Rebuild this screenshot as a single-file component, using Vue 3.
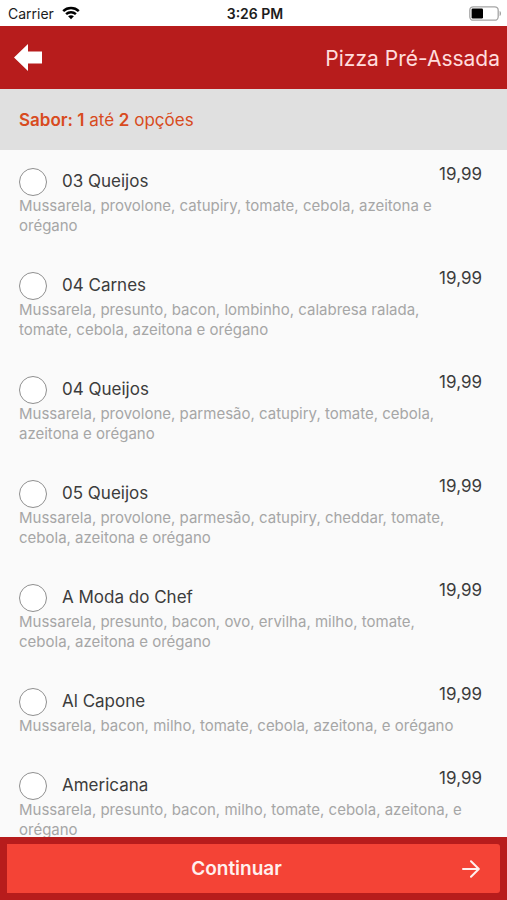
<script setup>
import { ref } from 'vue'

const chosen = ref([])
const flavours = [
  { id: 'queijos-03', name: '03 Queijos', price: '19,99', text: 'Mussarela, provolone, catupiry, tomate, cebola, azeitona e orégano' },
  { id: 'carnes-04', name: '04 Carnes', price: '19,99', text: 'Mussarela, presunto, bacon, lombinho, calabresa ralada, tomate, cebola, azeitona e orégano' },
  { id: 'queijos-04', name: '04 Queijos', price: '19,99', text: 'Mussarela, provolone, parmesão, catupiry, tomate, cebola, azeitona e orégano' },
  { id: 'queijos-05', name: '05 Queijos', price: '19,99', text: 'Mussarela, provolone, parmesão, catupiry, cheddar, tomate, cebola, azeitona e orégano' },
  { id: 'moda-chef', name: 'A Moda do Chef', price: '19,99', text: 'Mussarela, presunto, bacon, ovo, ervilha, milho, tomate, cebola, azeitona e orégano' },
  { id: 'al-capone', name: 'Al Capone', price: '19,99', text: 'Mussarela, bacon, milho, tomate, cebola, azeitona, e orégano' },
  { id: 'americana', name: 'Americana', price: '19,99', text: 'Mussarela, presunto, bacon, milho, tomate, cebola, azeitona, e orégano' },
]
</script>

<template>
  <div class="screen">
    <div class="status">
      <div class="carrier">
        <span>Carrier</span>
        <svg width="18" height="14" viewBox="0 0 18 14" aria-hidden="true">
          <g fill="none" stroke="#000" stroke-width="2.5">
            <path d="M1.2 5.2C5.6 1 12.4 1 16.8 5.2" />
            <path d="M4.1 8.2C6.9 5.6 11.1 5.6 13.9 8.2" />
          </g>
          <path d="M6.1 10.3C7.8 8.9 10.2 8.9 11.9 10.3L9 13.2Z" />
        </svg>
      </div>
      <span class="time">3:26 PM</span>
      <div class="battery">
        <svg width="33" height="15" viewBox="0 0 33 15" aria-hidden="true">
          <rect x="0.8" y="0.8" width="28.4" height="13.4" rx="3.5" fill="#fff" stroke="#a5a5a5" stroke-width="1.3" />
          <rect x="2.6" y="2.6" width="11.4" height="9.8" rx="1.2" />
          <path d="M30.6 5C32.4 5.6 32.4 9.4 30.6 10Z" fill="#999" />
        </svg>
      </div>
    </div>

    <header class="bar">
      <button class="back" type="button" aria-label="Voltar">
        <svg width="28" height="28" viewBox="0 0 28 28" aria-hidden="true">
          <path d="M0 13.5L14 0V7.5H28V19.5H14V27Z" fill="#fff" />
        </svg>
      </button>
      <h1>Pizza Pré-Assada</h1>
    </header>

    <p class="rule"><b>Sabor: 1</b> até <b>2</b> opções</p>

    <ul class="list">
      <li v-for="item in flavours" :key="item.id" class="item">
        <div class="pick">
          <input :id="item.id" v-model="chosen" type="checkbox" :value="item.id" />
          <label :for="item.id">{{ item.name }}</label>
        </div>
        <span class="price">{{ item.price }}</span>
        <p class="text">{{ item.text }}</p>
      </li>
    </ul>

    <footer class="foot">
      <button class="next" type="button">
        <span>Continuar</span>
        <svg width="18" height="18" viewBox="0 0 18 18" aria-hidden="true">
          <path d="M1 9H16.5M9 1.2L16.8 9L9 16.8" fill="none" stroke="#fff0ee" stroke-width="2" stroke-linecap="round" stroke-linejoin="round" />
        </svg>
      </button>
    </footer>
  </div>
</template>

<style>
body {
  background: #fafafa;
}
</style>

<style scoped>
.screen {
  display: flex;
  flex-direction: column;
  height: 100vh;
  background: #fafafa;
  color: #3c3c3c;
  font-family: Inter, "Liberation Sans", sans-serif;
}

.status {
  display: grid;
  grid-template-columns: 1fr auto 1fr;
  align-items: center;
  flex: none;
  height: 26px;
  padding: 0 5px 0 8px;
  background: #fff;
  color: #1c1c1c;
  font-size: 14px;
}

.carrier {
  display: flex;
  align-items: center;
  gap: 8px;
}

.time {
  font-weight: 600;
}

.battery {
  display: flex;
  justify-content: flex-end;
}

.bar {
  display: flex;
  align-items: center;
  justify-content: space-between;
  flex: none;
  height: 63px;
  padding: 0 7px 0 14px;
  background: #b71c1c;
}

.back {
  display: flex;
  padding: 0;
  border: 0;
  background: none;
}

h1 {
  margin: 0;
  color: #ffdcdc;
  font-size: 21px;
  font-weight: 400;
  line-height: 24px;
  padding-top: 2px;
}

.rule {
  flex: none;
  margin: 0;
  padding: 21px 19px 19px;
  background: #e0e0e0;
  color: #d84b20;
  font-size: 17px;
  line-height: 21px;
}

.rule b {
  font-weight: 600;
}

.list {
  flex: 1;
  min-height: 0;
  margin: 0;
  padding: 0;
  overflow: hidden;
  list-style: none;
}

.item {
  display: grid;
  grid-template-columns: 1fr auto;
  padding: 14px 25px 18px 19px;
}

.pick {
  display: flex;
  align-items: flex-start;
  gap: 15px;
  height: 28px;
  padding-top: 4px;
}

.pick input {
  flex: none;
  width: 28px;
  height: 28px;
  margin: 0;
  border: 1px solid #8f8f8f;
  border-radius: 50%;
  background: #fff;
  appearance: none;
}

.pick input:checked {
  border: 8px solid #f44336;
}

.pick label {
  font-size: 17px;
  line-height: 26px;
}

.text {
  grid-column: 1 / -1;
  margin: 0;
  padding-right: 12px;
  color: #a6a6a6;
  font-size: 15px;
  line-height: 20px;
}

.price {
  font-size: 17px;
  line-height: 20px;
}

.foot {
  flex: none;
  padding: 7px;
  background: #b71c1c;
}

.next {
  display: flex;
  align-items: center;
  gap: 16px;
  width: 100%;
  height: 49px;
  padding: 0 20px;
  border: 0;
  border-radius: 0 3px 3px 0;
  background: #f44336;
  color: #fff0ee;
  font-family: inherit;
  font-size: 19px;
  font-weight: 600;
}

.next span {
  flex: 1;
  text-align: center;
}

.next svg {
  flex: none;
}
</style>
